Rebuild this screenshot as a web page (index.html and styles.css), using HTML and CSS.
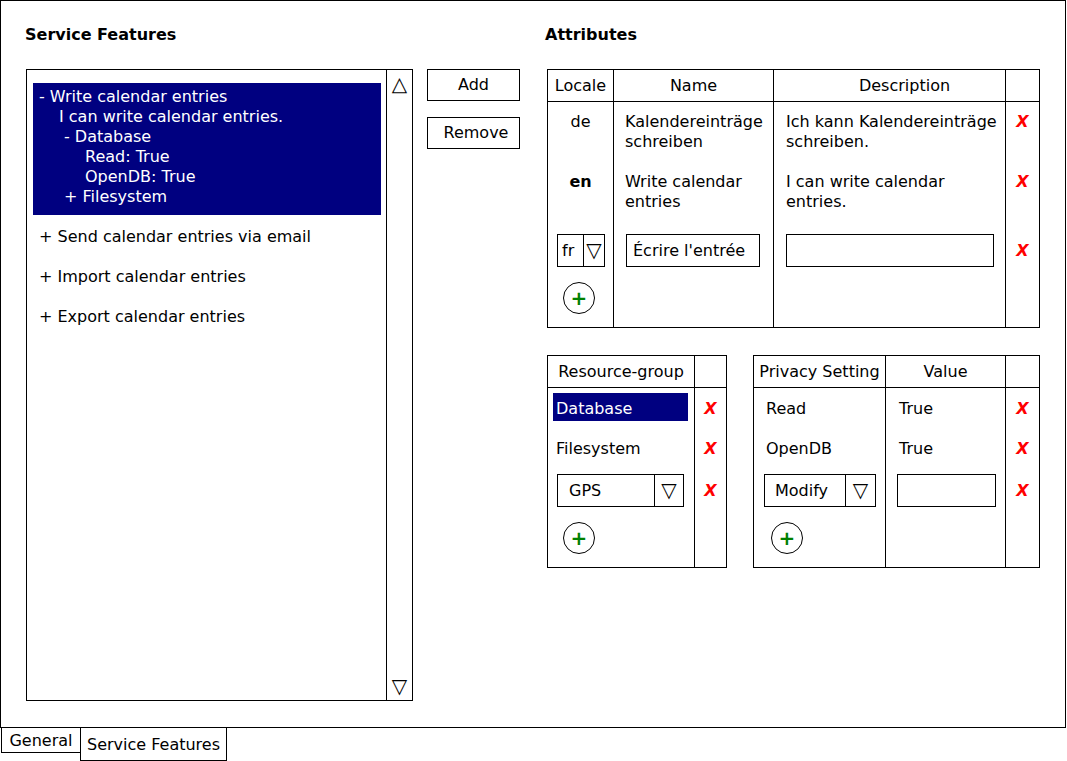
FILE: index.html
```html
<!DOCTYPE html>
<html lang="en">
<head>
<meta charset="utf-8">
<title>Service Features</title>
<link rel="stylesheet" href="styles.css">
</head>
<body>
<div class="window">
  <section class="features">
    <h2 class="title">Service Features</h2>
    <div class="features-body">
      <div class="listbox">
        <div class="list">
          <div class="selected">
            <div>- Write calendar entries</div>
            <div class="ind1">I can write calendar entries.</div>
            <div class="ind2">- Database</div>
            <div class="ind3">Read: True</div>
            <div class="ind3">OpenDB: True</div>
            <div class="ind2">+ Filesystem</div>
          </div>
          <div class="item">+ Send calendar entries via email</div>
          <div class="item">+ Import calendar entries</div>
          <div class="item">+ Export calendar entries</div>
        </div>
        <div class="scrollbar"><span>△</span><span>▽</span></div>
      </div>
      <div class="buttons">
        <button class="btn">Add</button>
        <button class="btn btn-remove">Remove</button>
      </div>
    </div>
  </section>

  <section class="attributes">
    <h2 class="title">Attributes</h2>
    <div class="grid attr-grid">
      <div class="cell first head">Locale</div>
      <div class="cell head">Name</div>
      <div class="cell head head-desc">Description</div>
      <div class="cell head"></div>

      <div class="cell first body center">de</div>
      <div class="cell body txt">Kalendereinträge<br>schreiben</div>
      <div class="cell body txt">Ich kann Kalendereinträge<br>schreiben.</div>
      <div class="cell body center"><span class="del">X</span></div>

      <div class="cell first body center"><b>en</b></div>
      <div class="cell body txt">Write calendar<br>entries</div>
      <div class="cell body txt">I can write calendar<br>entries.</div>
      <div class="cell body center"><span class="del">X</span></div>

      <div class="cell first edit">
        <div class="select sel-locale"><span class="val">fr</span><span class="arrow">▽</span></div>
        <div class="plus">+</div>
      </div>
      <div class="cell edit"><div class="input in-name">Écrire l'entrée</div></div>
      <div class="cell edit"><div class="input in-desc"></div></div>
      <div class="cell edit center del-edit"><span class="del">X</span></div>
    </div>

    <div class="subtables">
      <div class="grid res-grid">
        <div class="cell first head">Resource-group</div>
        <div class="cell head"></div>

        <div class="cell first"><div class="hl">Database</div></div>
        <div class="cell center row"><span class="del">X</span></div>

        <div class="cell first row rg-name">Filesystem</div>
        <div class="cell center row"><span class="del">X</span></div>

        <div class="cell first sub-edit">
          <div class="select sel-gps"><span class="val">GPS</span><span class="arrow">▽</span></div>
          <div class="plus">+</div>
        </div>
        <div class="cell center sub-edit del-edit"><span class="del">X</span></div>
      </div>

      <div class="grid priv-grid">
        <div class="cell first head">Privacy Setting</div>
        <div class="cell head">Value</div>
        <div class="cell head"></div>

        <div class="cell first row pv-name">Read</div>
        <div class="cell row pv-val">True</div>
        <div class="cell center row"><span class="del">X</span></div>

        <div class="cell first row pv-name">OpenDB</div>
        <div class="cell row pv-val">True</div>
        <div class="cell center row"><span class="del">X</span></div>

        <div class="cell first sub-edit">
          <div class="select sel-modify"><span class="val">Modify</span><span class="arrow">▽</span></div>
          <div class="plus plus-priv">+</div>
        </div>
        <div class="cell sub-edit"><div class="input in-value"></div></div>
        <div class="cell center sub-edit del-edit"><span class="del">X</span></div>
      </div>
    </div>
  </section>
</div>
<div class="tabs">
  <div class="tab tab-general">General</div>
  <div class="tab tab-active">Service Features</div>
</div>
</body>
</html>
```

FILE: styles.css
```css
* { box-sizing: border-box; }

body {
  margin: 0;
  font-family: "DejaVu Sans", "Liberation Sans", sans-serif;
  font-size: 16px;
  line-height: 20px;
  color: #000;
  background: #fff;
}

.window {
  width: 1066px;
  height: 728px;
  border: 1px solid #000;
  padding: 24px 0 0 25px;
  display: flex;
}

.title {
  margin: 0 0 24px;
  font-size: 16px;
  font-weight: bold;
  line-height: 20px;
}

/* ---------- left: feature list ---------- */
.features { width: 494px; flex: none; }
.features .title { margin-left: -1px; }

.features-body {
  display: flex;
  align-items: flex-start;
  gap: 14px;
}

.listbox {
  width: 387px;
  height: 632px;
  border: 1px solid #000;
  display: flex;
}

.list { flex: 1; }

.selected {
  margin: 13px 5px 0 6px;
  height: 132px;
  padding: 4px 6px 8px;
  background: #000080;
  color: #fff;
  white-space: nowrap;
}
.ind1 { padding-left: 20px; }
.ind2 { padding-left: 25px; }
.ind3 { padding-left: 46px; }

.item {
  padding-left: 12px;
  margin-top: 20px;
  white-space: nowrap;
}
.selected + .item { margin-top: 12px; }

.scrollbar {
  width: 26px;
  border-left: 1px solid #000;
  display: flex;
  flex-direction: column;
  justify-content: space-between;
  align-items: center;
  padding: 2px 0 2px;
  font-size: 20px;
  line-height: 24px;
}

.buttons {
  display: flex;
  flex-direction: column;
  gap: 16px;
}

.btn {
  width: 93px;
  height: 32px;
  border: 1px solid #000;
  border-radius: 0;
  background: #fff;
  color: #000;
  font: inherit;
  padding: 0;
}
.btn-remove { padding-left: 5px; }

/* ---------- right: attributes ---------- */
.attributes { margin-left: 27px; }
.attributes .title { margin-left: -2px; }

.grid {
  display: grid;
  border: 1px solid #000;
}

.attr-grid {
  width: 493px;
  height: 259px;
  grid-template-columns: 65px 160px 232px 34px;
  grid-template-rows: 32px 60px 60px 1fr;
}

.cell { border-left: 1px solid #000; white-space: nowrap; }
.cell.first { border-left: 0; }

.head {
  border-bottom: 1px solid #000;
  text-align: center;
  line-height: 31px;
}
.head-desc { padding-left: 30px; }

.body { padding-top: 10px; }
.center { text-align: center; }
.txt { padding-left: 11px; }
.attr-grid .txt:nth-child(4n+3) { padding-left: 12px; }

.edit { padding-top: 12px; }
.del-edit { line-height: 34px; }

.del {
  color: #f00;
  font-weight: bold;
  font-style: italic;
}

.select {
  display: flex;
  height: 33px;
  border: 1px solid #000;
  line-height: 31px;
}
.select .val { flex: 1; }
.select .arrow {
  flex: none;
  border-left: 1px solid #000;
  text-align: center;
  font-size: 20px;
}

.sel-locale { width: 48px; margin-left: 9px; }
.sel-locale .val { padding-left: 4px; }
.sel-locale .arrow { width: 21px; }

.sel-gps { width: 127px; margin-left: 9px; }
.sel-gps .val { padding-left: 11px; }
.sel-gps .arrow { width: 29px; }

.sel-modify { width: 112px; margin-left: 10px; }
.sel-modify .val { padding-left: 10px; }
.sel-modify .arrow { width: 30px; }

.input {
  height: 33px;
  border: 1px solid #000;
  line-height: 31px;
  padding-left: 6px;
}
.in-name { width: 134px; margin-left: 12px; }
.in-desc { width: 208px; margin-left: 12px; }
.in-value { width: 99px; margin-left: 11px; }

.plus {
  width: 32px;
  height: 32px;
  margin: 15px 0 0 15px;
  border: 1px solid #000;
  border-radius: 50%;
  display: flex;
  align-items: center;
  justify-content: center;
  color: #008000;
  font-weight: bold;
  font-size: 20px;
  line-height: 1;
}
.plus-priv { margin-left: 17px; }

.subtables {
  display: flex;
  gap: 26px;
  margin-top: 27px;
}

.res-grid {
  width: 180px;
  height: 213px;
  grid-template-columns: 146px 32px;
  grid-template-rows: 32px 40px 40px 1fr;
}

.priv-grid {
  width: 287px;
  height: 213px;
  grid-template-columns: 131px 120px 34px;
  grid-template-rows: 32px 40px 40px 1fr;
}

.row { line-height: 40px; padding-top: 1px; }
.rg-name { padding-left: 8px; }
.pv-name { padding-left: 12px; }
.pv-val { padding-left: 13px; }

.hl {
  margin: 5px 6px 0 5px;
  height: 28px;
  line-height: 28px;
  padding: 2px 0 0 3px;
  background: #000080;
  color: #fff;
  overflow: hidden;
}

.sub-edit { padding-top: 6px; }

/* ---------- tabs ---------- */
.tabs {
  display: flex;
  align-items: flex-start;
  margin-top: -1px;
}
.tab {
  border: 1px solid #000;
  display: flex;
  align-items: center;
  justify-content: center;
  white-space: nowrap;
}
.tab-general {
  width: 80px;
  height: 26px;
  margin-left: 1px;
  padding-top: 2px;
}
.tab-active {
  width: 147px;
  height: 34px;
  margin-left: -1px;
  padding-top: 1px;
}
```
